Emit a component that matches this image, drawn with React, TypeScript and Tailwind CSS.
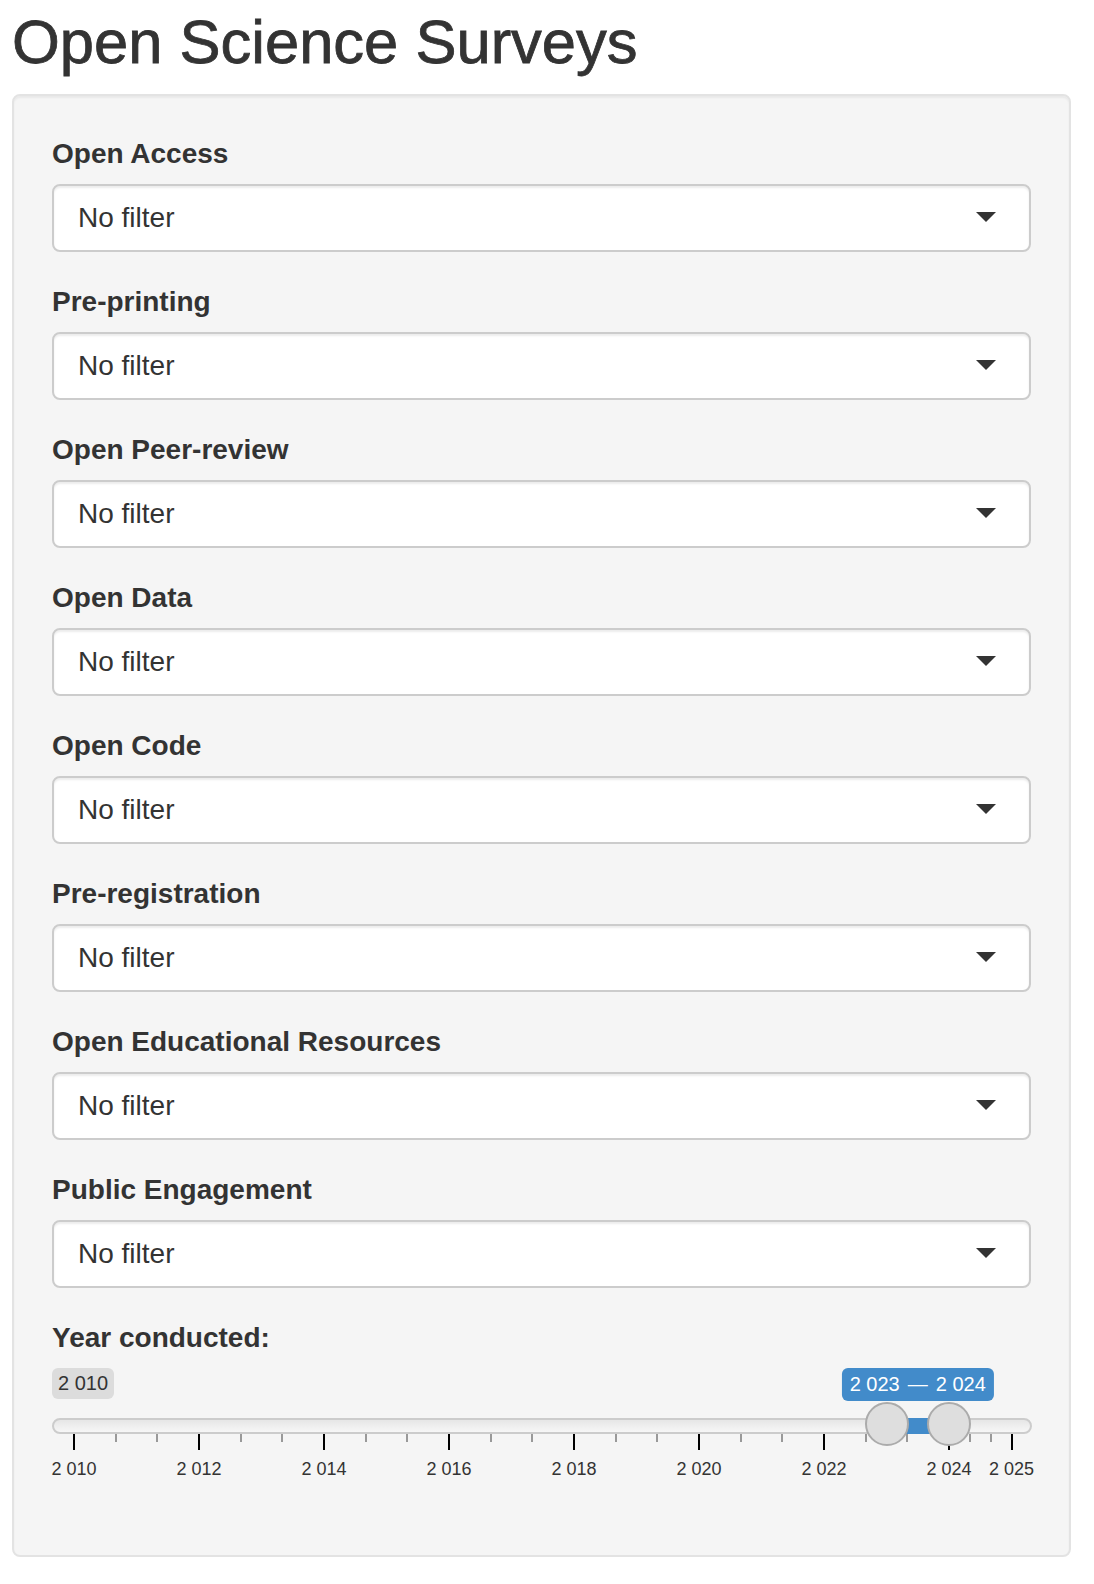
import React from 'react';

const FILTERS = [
  'Open Access',
  'Pre-printing',
  'Open Peer-review',
  'Open Data',
  'Open Code',
  'Pre-registration',
  'Open Educational Resources',
  'Public Engagement',
];

// slider geometry (px, relative to the slider box)
const MIN = 2010;
const MAX = 2025;
const X0 = 22;
const SPAN = 937.5;
const pos = (y: number) => X0 + ((y - MIN) / (MAX - MIN)) * SPAN;

const MAJORS = [2010, 2012, 2014, 2016, 2018, 2020, 2022, 2024, 2025];
const MINORS: number[] = [];
for (let i = 0; i < MAJORS.length - 1; i++) {
  const a = pos(MAJORS[i]);
  const b = pos(MAJORS[i + 1]);
  MINORS.push(a + (b - a) / 3, a + ((b - a) * 2) / 3);
}

const fmt = (y: number) => `${String(y).slice(0, 1)} ${String(y).slice(1)}`;

function SelectBox({ label }: { label: string }) {
  return (
    <div className="flex flex-col gap-[10px]">
      <label className="text-[28px] font-bold leading-[40px] text-[#333]">{label}</label>
      <div className="flex h-[68px] items-center justify-between rounded-lg border-2 border-[#ccc] bg-white pl-[24px] pr-[33px] text-[28px] text-[#333] shadow-[inset_0_2px_2px_rgba(0,0,0,0.075)]">
        <span>No filter</span>
        <span className="mb-[2px] h-0 w-0 border-x-[10px] border-t-[10px] border-x-transparent border-t-[#333]" />
      </div>
    </div>
  );
}

function YearSlider({ from, to }: { from: number; to: number }) {
  const a = pos(from);
  const b = pos(to);
  return (
    <div className="relative h-[149px]">
      {/* min label */}
      <span className="absolute left-0 top-0 h-[31px] rounded-[6px] bg-black/10 px-[6px] text-[20px] leading-[31px] text-[#333]">
        {fmt(MIN)}
      </span>

      {/* from / to label */}
      <span
        className="absolute top-0 h-[33px] -translate-x-1/2 whitespace-nowrap rounded-[6px] bg-[#428bca] px-[8px] text-[20px] leading-[33px] text-white"
        style={{ left: (a + b) / 2 }}
      >
        {fmt(from)}
        <span className="mx-[8px]">—</span>
        {fmt(to)}
      </span>

      {/* track */}
      <div className="absolute left-0 top-[50px] h-[16px] w-[980px] rounded-full border-2 border-[#ccc] bg-[linear-gradient(to_bottom,#dedede_-50%,#fff_150%)]" />
      <div className="absolute top-[50px] h-[16px] bg-[#428bca]" style={{ left: a, width: b - a }} />

      {/* grid */}
      {MINORS.map((x, i) => (
        <span key={'m' + i} className="absolute top-[66px] h-[8px] w-[2px] bg-[#999]" style={{ left: x - 1 }} />
      ))}
      {MAJORS.map((y) => (
        <React.Fragment key={y}>
          <span className="absolute top-[66px] h-[16px] w-[2px] bg-black" style={{ left: pos(y) - 1 }} />
          <span
            className="absolute top-[90px] -translate-x-1/2 whitespace-nowrap text-[18px] leading-[22px] text-[#333]"
            style={{ left: pos(y) }}
          >
            {fmt(y)}
          </span>
        </React.Fragment>
      ))}

      {/* handles */}
      {[a, b].map((x, i) => (
        <span
          key={'h' + i}
          className="absolute top-[34px] h-[44px] w-[44px] rounded-full border-2 border-[#ababab] bg-[#dedede]"
          style={{ left: x - 22 }}
        />
      ))}
    </div>
  );
}

export default function App() {
  return (
    <div className="flex min-h-screen flex-col items-start gap-[19px] bg-white px-[12px] pt-[9px] font-['Liberation_Sans',Arial,sans-serif] text-[#333]">
      <h2
        className="text-[61.5px] font-medium leading-[66px] text-[#333]"
        style={{ WebkitTextStroke: '0.8px #333' }}
      >
        Open Science Surveys
      </h2>

      <div className="flex w-[1059px] flex-col gap-[30px] rounded-lg border-2 border-[#e3e3e3] bg-[#f5f5f5] p-[38px] shadow-[inset_0_2px_2px_rgba(0,0,0,0.05)]">
        {FILTERS.map((f) => (
          <SelectBox key={f} label={f} />
        ))}

        <div className="flex flex-col gap-[10px]">
          <label className="text-[28px] font-bold leading-[40px] text-[#333]">Year conducted:</label>
          <YearSlider from={2023} to={2024} />
        </div>
      </div>
    </div>
  );
}
